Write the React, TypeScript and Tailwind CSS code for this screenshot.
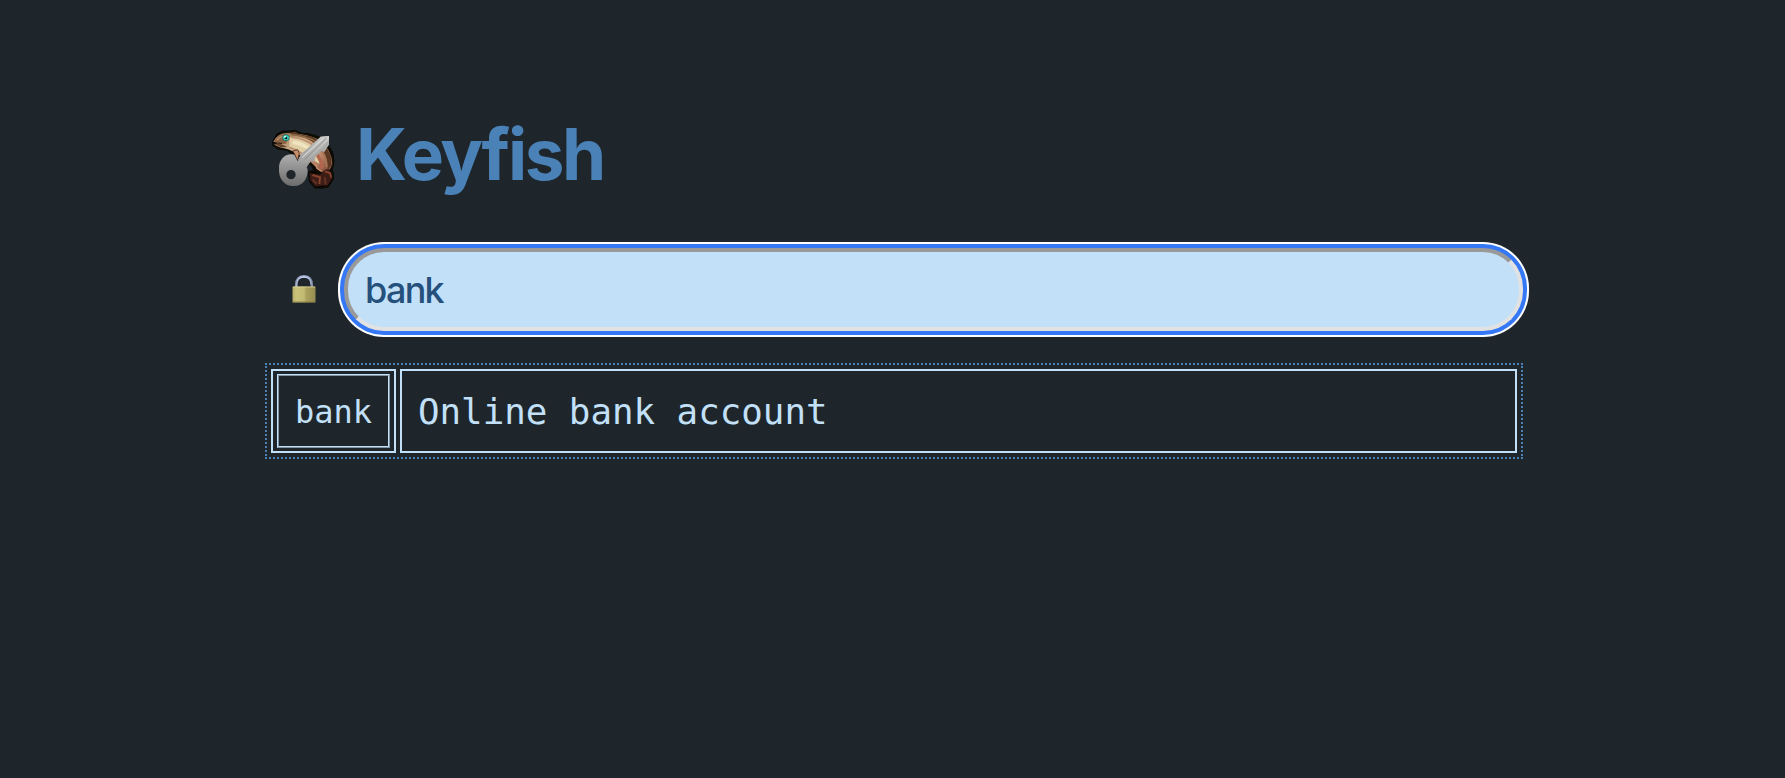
import { useState } from "react";

function FishKeyLogo() {
  return (
    <svg className="h-[80px] w-[84px] shrink-0" viewBox="0 0 252 240" aria-hidden="true">
      <defs>
        <linearGradient id="metal" x1="0" y1="0" x2="0" y2="1">
          <stop offset="0" stopColor="#b4b4b2" />
          <stop offset="0.45" stopColor="#a6a6a6" />
          <stop offset="1" stopColor="#6c6c6c" />
        </linearGradient>
        <linearGradient id="shaft" x1="1" y1="0" x2="0" y2="1">
          <stop offset="0" stopColor="#cfd0cc" />
          <stop offset="1" stopColor="#a0a19f" />
        </linearGradient>
        <linearGradient id="body" x1="0" y1="0" x2="1" y2="1">
          <stop offset="0" stopColor="#8a6444" />
          <stop offset="0.35" stopColor="#cdb08a" />
          <stop offset="0.7" stopColor="#b98467" />
          <stop offset="1" stopColor="#70402f" />
        </linearGradient>
        <filter id="soft" x="-10%" y="-10%" width="120%" height="120%">
          <feGaussianBlur stdDeviation="1.8" />
        </filter>
      </defs>
      <g filter="url(#soft)">
        <path d="M34 72L46 50L65 41L79 42L100 39L116 47L143 50L171 59L195 79L210 104L214 131L209 152L213 181L197 206L180 208L160 208L144 189L142 162L159 160L150 140L133 133L112 112L107 129L98 112L77 95L52 92L35 82Z" fill="#090706" stroke="#090706" strokeWidth="7" strokeLinejoin="round" />
        <path d="M34 71Q47 44 77 45Q136 48 169 64Q209 93 211 137Q206 158 190 166L174 159Q157 144 137 123L104 107Q81 92 53 88L36 80L47 75Z" fill="url(#body)" />
        <path d="M79 44L100 41L117 50L145 54L170 66L193 86L207 116L208 142L197 155Q200 121 177 92Q148 64 112 54Z" fill="#5a3822" />
        <path d="M86 50Q128 53 160 70" fill="none" stroke="#8d6a45" strokeWidth="5" />
        <path d="M38 68Q52 50 75 49L81 57L71 78L56 78L42 73Z" fill="#8c6344" />
        <path d="M44 67Q52 57 62 55" fill="none" stroke="#bd936c" strokeWidth="4" />
        <path d="M36 77L58 79L76 87L57 88Z" fill="#64402b" />
        <path d="M38 75L60 76" stroke="#24130b" strokeWidth="3" />
        <path d="M82 58Q115 58 141 74Q170 97 174 139Q155 129 139 114Q111 107 82 88Z" fill="#dfcda4" />
        <path d="M82 88Q105 94 124 108M88 58Q132 62 161 88" fill="none" stroke="#b9856a" strokeWidth="4" />
        <path d="M92 73Q120 76 144 94" fill="none" stroke="#efe3c0" strokeWidth="11" />
        <path d="M160 104Q178 124 180 152" fill="none" stroke="#b3654e" strokeWidth="10" />
        <path d="M175 92Q193 113 194 147" fill="none" stroke="#a77352" strokeWidth="6" />
        <path d="M162 138L165 151L179 160" fill="none" stroke="#c78a6a" strokeWidth="5" />
        <path d="M143 165L173 170L188 155L201 153L211 181L197 202L160 205L145 187Z" fill="#3e1c16" />
        <path d="M151 171L174 178L172 198M188 160L204 165L208 178" fill="none" stroke="#85432f" strokeWidth="6" />
        <path d="M152 185L164 197M188 178L191 200" fill="none" stroke="#643325" strokeWidth="6" />
        <ellipse cx="72" cy="59" rx="10" ry="9" fill="#3ad6c5" stroke="#075246" strokeWidth="2" />
        <circle cx="72" cy="60" r="4" fill="#06251f" />
        <circle cx="69" cy="56" r="3" fill="#d6fff6" />
        <path fillRule="evenodd" d="M91 109C68 107 51 125 51 150C49 181 66 204 94 204C122 205 138 182 137 156L134 147L148 128L157 132L160 117L178 99L187 102L201 80V54L176 56L118 107L107 125L98 110ZM87 156A14 14 0 1 0 87 184A14 14 0 1 0 87 156Z" fill="url(#metal)" />
        <path d="M176 56L201 54V65L133 132L111 126Z" fill="url(#shaft)" />
        <path d="M193 61L128 125" stroke="#888a87" strokeWidth="3" />
        <path d="M183 61L121 118" stroke="#e0e1dd" strokeWidth="3" />
        <path d="M92 99L107 95L112 106L107 128L98 109Z" fill="#c38e68" stroke="#2a180f" strokeWidth="2" />
      </g>
    </svg>
  );
}

function PadlockIcon() {
  return (
    <svg className="h-[28px] w-[24px] shrink-0" viewBox="0 0 24 28" aria-hidden="true">
      <defs>
        <linearGradient id="brass" x1="0" y1="0" x2="1" y2="0">
          <stop offset="0" stopColor="#b5ad65" />
          <stop offset="0.15" stopColor="#c9c27b" />
          <stop offset="0.5" stopColor="#c2ba73" />
          <stop offset="0.6" stopColor="#aaa15e" />
          <stop offset="1" stopColor="#978c50" />
        </linearGradient>
        <linearGradient id="shackle" x1="0" y1="0" x2="1" y2="0">
          <stop offset="0" stopColor="#8996b4" />
          <stop offset="0.5" stopColor="#b5c3ea" />
          <stop offset="1" stopColor="#8190ad" />
        </linearGradient>
      </defs>
      <path d="M4.2 13V10C4.2 4.2 7.3 1.4 12 1.4S19.8 4.2 19.8 10V13" fill="none" stroke="url(#shackle)" strokeWidth="2.5" />
      <path d="M4.8 12V9.5C5 4.5 8 2 12 2S18.8 4.5 19 9.5" fill="none" stroke="#dce4fb" strokeWidth="0.6" />
      <rect x="0.5" y="11.5" width="23" height="16" rx="0.6" fill="url(#brass)" />
      <path d="M1 12H23" stroke="#dcd69b" strokeWidth="0.8" />
      <path d="M1 27H23" stroke="#7d7340" strokeWidth="0.8" />
    </svg>
  );
}

export default function App() {
  const [query, setQuery] = useState("bank");
  return (
    <main className="min-h-screen bg-[#1e262c] pt-[118px] pl-[262px]">
      <header className="flex h-[80px] items-start">
        <FishKeyLogo />
        <h1 className="ml-[10px] -mt-[8px] font-['Inter',sans-serif] text-[71px] leading-[88px] font-bold tracking-[-2.5px] text-[#4a81b6]">
          Keyfish
        </h1>
      </header>
      <div className="mt-[50px] flex h-[83px] items-center">
        <div className="ml-[30px] flex w-[52px] pb-[1px]">
          <PadlockIcon />
        </div>
        <input
          aria-label="Search"
          value={query}
          onChange={(e) => setQuery(e.target.value)}
          className="h-[83px] w-[1179px] rounded-[40px] border-4 border-t-[#999999] border-r-[#e2e2e2] border-b-[#e2e2e2] border-l-[#999999] bg-[#c2e0f8] px-[17px] font-['Inter',sans-serif] text-[36px] font-medium tracking-[-1.7px] text-[#25507c] shadow-[0_0_0_4px_#3478f6,0_0_0_6px_#ffffff] outline-none"
        />
      </div>
      <section className="mt-[32px] ml-[3px] flex h-[96px] w-[1258px] gap-[4px] border-2 border-dotted border-[#4a81b6] p-[4px] font-['DejaVu_Sans_Mono',monospace] text-[#c2e0f8]">
        <div className="flex w-[125px] border-2 border-[#c2e0f8] px-[4px] py-[3px]">
          <button className="flex h-[74px] w-[113px] items-center justify-center border-2 border-[#c2e0f8] pt-[1px] text-[32px] [border-style:ridge]">
            bank
          </button>
        </div>
        <div className="flex w-[1117px] items-center border-2 border-[#c2e0f8] pt-[2px] pl-[16px] text-[35.8px]">
          Online bank account
        </div>
      </section>
    </main>
  );
}
